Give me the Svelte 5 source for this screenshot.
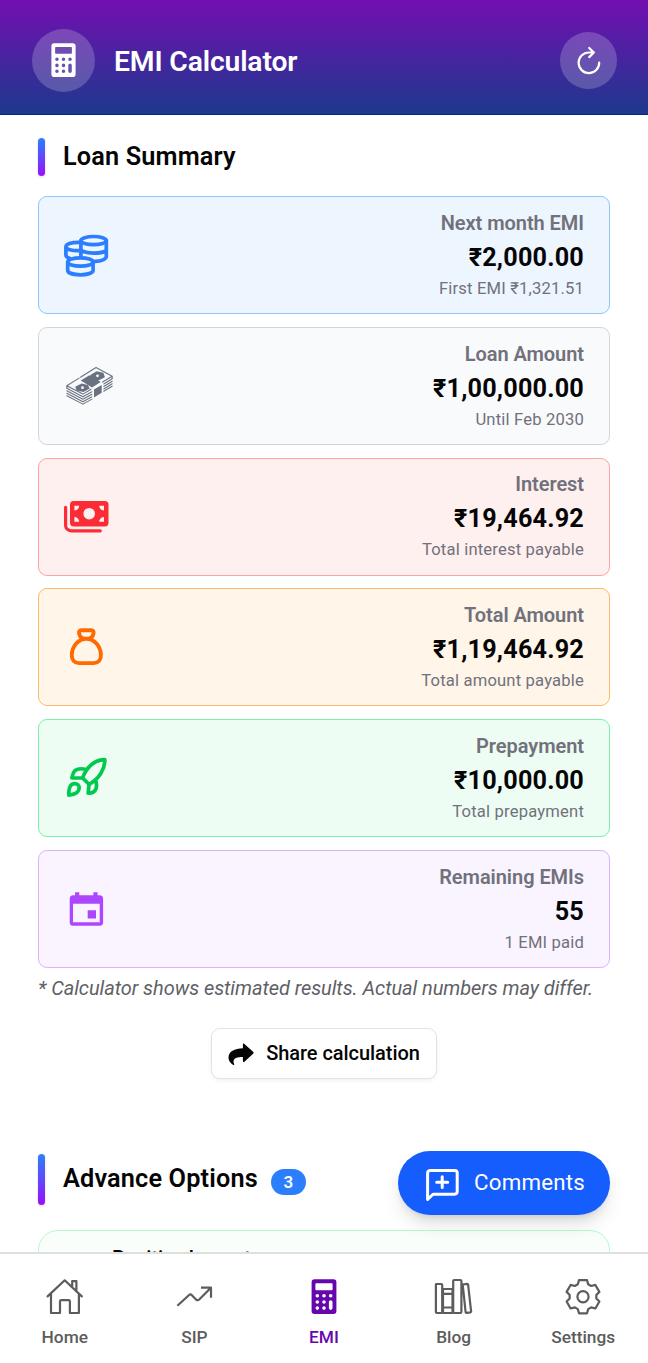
<script>
  const cards = [
    { icon: 'coins', label: 'Next month EMI', value: '₹2,000.00', note: 'First EMI ₹1,321.51', tone: 'blue' },
    { icon: 'stack', label: 'Loan Amount', value: '₹1,00,000.00', note: 'Until Feb 2030', tone: 'gray' },
    { icon: 'cash', label: 'Interest', value: '₹19,464.92', note: 'Total interest payable', tone: 'red' },
    { icon: 'bag', label: 'Total Amount', value: '₹1,19,464.92', note: 'Total amount payable', tone: 'orange' },
    { icon: 'rocket', label: 'Prepayment', value: '₹10,000.00', note: 'Total prepayment', tone: 'green' },
    { icon: 'event', label: 'Remaining EMIs', value: '55', note: '1 EMI paid', tone: 'purple' }
  ];
  const tabs = ['Home', 'SIP', 'EMI', 'Blog', 'Settings'];

  // Six-toothed gear outline centred on 20,19.7
  function gearPath() {
    const tooth = [[-5.2, -12.4], [-4, -16.6], [4, -16.6], [5.2, -12.4]];
    let d = '';
    for (let i = 0; i < 6; i++) {
      const a = (i * Math.PI) / 3;
      tooth.forEach(([x, y], j) => {
        const px = 20 + x * Math.cos(a) - y * Math.sin(a);
        const py = 19.7 + x * Math.sin(a) + y * Math.cos(a);
        d += `${i + j === 0 ? 'M' : 'L'}${px.toFixed(2)} ${py.toFixed(2)}`;
      });
    }
    return d + 'Z';
  }
</script>

{#snippet calculator()}
  <path fill="currentColor" fill-rule="evenodd" d="M10.5 2.3h19a2.9 2.9 0 0 1 2.9 2.9v28.9a2.9 2.9 0 0 1-2.9 2.9h-19a2.9 2.9 0 0 1-2.9-2.9V5.2a2.9 2.9 0 0 1 2.9-2.9zM12.2 6.2a.8.8 0 0 0-.8.8v5.4c0 .5.3.8.8.8h15.6c.5 0 .8-.3.8-.8V7a.8.8 0 0 0-.8-.8zM11.5 18.8a1.8 1.8 0 1 0 3.6 0a1.8 1.8 0 1 0-3.6 0M18.2 18.8a1.8 1.8 0 1 0 3.6 0a1.8 1.8 0 1 0-3.6 0M24.9 18.8a1.8 1.8 0 1 0 3.6 0a1.8 1.8 0 1 0-3.6 0M11.5 25a1.8 1.8 0 1 0 3.6 0a1.8 1.8 0 1 0-3.6 0M18.2 25a1.8 1.8 0 1 0 3.6 0a1.8 1.8 0 1 0-3.6 0M11.5 31.1a1.8 1.8 0 1 0 3.6 0a1.8 1.8 0 1 0-3.6 0M18.2 31.1a1.8 1.8 0 1 0 3.6 0a1.8 1.8 0 1 0-3.6 0M24.9 25a1.8 1.8 0 0 1 3.6 0v6.1a1.8 1.8 0 0 1-3.6 0z" />
{/snippet}

<div class="screen">
  <header>
    <span class="logo"><svg width="39" height="39" viewBox="0 0 40 40">{@render calculator()}</svg></span>
    <h1>EMI Calculator</h1>
    <button class="refresh" aria-label="Reset">
      <svg width="30" height="32" viewBox="0 -1 30 32" fill="none" stroke="currentColor" stroke-width="2.2" stroke-linecap="round" stroke-linejoin="round"><path d="M25.2 17.7a10.3 10.3 0 1 1-10.3-10.2h5M15.2 3l4.7 4.5-4.7 4.6" /></svg>
    </button>
  </header>

  <main>
    <h2 class="loan"><i></i><span>Loan Summary</span></h2>
    <section class="cards">
      {#each cards as c}
        <article class={c.tone}>
          <svg width="52" height="52" viewBox="0 0 52 52" fill="none" stroke="currentColor" stroke-linecap="round" stroke-linejoin="round">
            {#if c.icon === 'coins'}
              <g stroke-width="3.7">
                <ellipse cx="32.6" cy="11.6" rx="12.7" ry="4.1" />
                <path d="M19.9 11.6v18M45.3 11.6v16c0 2.5-5 4.7-11.2 4.7M19.9 20.2c1 5.2 25.4 5.2 25.4 0M18.1 13.4C10.1 13.3 4.9 15 4.9 17.7v8.3c0 1.4 1.2 2.4 3.2 3M4.9 17.7c0 2.5 6 4.2 13.2 4" />
                <ellipse cx="19.4" cy="33" rx="12.7" ry="4.2" fill="#edf5ff" />
                <path d="M6.7 33v8.2c0 6.1 25.4 6.1 25.4 0V33" />
              </g>
            {:else if c.icon === 'stack'}
              <path fill="currentColor" stroke="none" d="M19.7 20.5l8.7-5.3 11.3 6.8-8.7 5.4zM33 29.5l7.7-4.5v7.7L33 37.4zM14.2 26.8l6.4-3.3 6.2 1.4 2 3.7-6.4 3.5-6.8-1.6zM29.2 14.9l6.5-3.6 6.7 1.5 1.5 4.4-6.5 3.2-6.6-2.3z" />
              <circle cx="21.5" cy="27.7" r="1.4" fill="#f9fafb" stroke="none" />
              <circle cx="36.5" cy="15.8" r="1.4" fill="#f9fafb" stroke="none" />
              <path stroke-width="1.1" d="M19.5 17.2L35 7.5l16.2 8.8L41.6 22M18.1 18.1L5.8 25.8l16.1 8.3 8.2-4.8M5.8 25.8v2M51.2 16.3v2" />
              <path stroke-width="1.05" d="M5.8 28.3l16.1 8.5 9-5M5.8 30.8l16.1 8.5 9-5M5.8 33.3l16.1 8.5 9-5M5.8 35.8l16.1 8.3 9-5M51.2 18.8L42.8 24M51.2 21.3l-8.4 5.2M51.2 23.8l-8.4 5.2M51.2 26.3l-8.4 5" />
            {:else if c.icon === 'cash'}
              <path transform="translate(-.6 0)" fill="currentColor" stroke="none" fill-rule="evenodd" d="M13.2 10h31.3a3.6 3.6 0 0 1 3.6 3.6v18.2a3.6 3.6 0 0 1-3.6 3.6H13.2a3.6 3.6 0 0 1-3.6-3.6V13.6a3.6 3.6 0 0 1 3.6-3.6zM23 22.7a5.8 5.8 0 1 0 11.6 0a5.8 5.8 0 1 0-11.6 0M14 14.8v4.7c2.6 0 4.8-2.1 4.8-4.7zM38.8 14.8c0 2.6 2.2 4.7 4.8 4.7v-4.7zM14 26v4.8h4.8c0-2.6-2.2-4.8-4.8-4.8zM43.6 26c-2.6 0-4.8 2.2-4.8 4.8h4.8z" />
              <path stroke-width="3.2" d="M4.6 16.3v18.1a5.4 5.4 0 0 0 5.4 5.4h29.3" />
            {:else if c.icon === 'bag'}
              <path stroke-width="3.9" d="M20.5 9.2h9.6c2 0 2.9 1.5 2.4 3.3-.7 3-2.8 5.3-5.6 5.3h-3.2c-2.8 0-4.9-2.3-5.6-5.3-.4-1.8.4-3.3 2.4-3.3zM25.3 17.8c-8.1 0-14.5 7.7-14.5 16.5 0 4.9 2.9 7.8 7 7.8h15.1c4.1 0 7-2.9 7-7.8 0-8.8-6.4-16.5-14.6-16.5z" />
            {:else if c.icon === 'rocket'}
              <path stroke-width="3.7" d="M43.8 7.6c-8.7-.2-18.2 6.3-22.2 18.4l6.4 6.3C38.1 27 44.1 17.3 43.8 7.6zM24.4 17.2c-4.6-.9-8.4-.7-10.8 1.8-1.8 2-2.1 4.5-2.7 6.8L21.6 26M28 32.3l-.8 8.8c4.3.2 6.6-1.5 7.8-4.4.9-2.3.6-4.4 0-7.1M7.8 43.1c-.4-7 1.6-11.5 5.9-11.5 2.7 0 4.5 1.7 4.5 4.2 0 4.6-3.8 6.7-10.4 7.3z" />
            {:else}
              <path fill="currentColor" stroke="none" fill-rule="evenodd" d="M14.1 9.3h4.2v3h14.1v-3h4.2v3h2a3.5 3.5 0 0 1 3.5 3.5v23.4a3.5 3.5 0 0 1-3.5 3.5H12.2a3.5 3.5 0 0 1-3.5-3.5V15.8a3.5 3.5 0 0 1 3.5-3.5h1.9zM12 20.7v18.6h26.7V20.7zM26.7 27.3H35v8.3h-8.3z" />
            {/if}
          </svg>
          <div class="info">
            <div class="label">{c.label}</div>
            <div class="value">{c.value}</div>
            <div class="note">{c.note}</div>
          </div>
        </article>
      {/each}
    </section>
    <p class="disclaimer">* Calculator shows estimated results. Actual numbers may differ.</p>
    <button class="share">
      <svg width="26" height="23" viewBox="0 -0.8 26 23" fill="currentColor"><path d="M16.4 1.1c-.9-.8-1.5-.5-1.5.7v3.7C6.4 5.8.8 8.5.5 14.6c-.2 3.1 1.8 6.1 5 7.7.7.3 1 0 .7-.7-2.3-5.8 1.6-7.2 8.7-7.4v4c0 1.2.7 1.5 1.5.7l8.7-7.9c.7-.7.7-1.3 0-2z" /></svg>
      <span>Share calculation</span>
    </button>
    <h2 class="advance"><i></i><span>Advance Options</span><b>3</b></h2>
    <section class="option">Positive Impact</section>
  </main>

  <button class="comments">
    <svg width="34" height="34" viewBox="0 0 34 34" fill="none" stroke="currentColor" stroke-width="3" stroke-linecap="round" stroke-linejoin="round"><path d="M2.6 31.5V5a2.6 2.6 0 0 1 2.6-2.6h24.4A2.6 2.6 0 0 1 32.2 5v18.6a2.6 2.6 0 0 1-2.6 2.6H8zM11.7 14.2h11M17.2 8.8v10.8" /></svg>
    <span>Comments</span>
  </button>

  <nav>
    {#each tabs as t}
      <a href="#{t.toLowerCase()}" class:active={t === 'EMI'}>
        <svg width="40" height="40" viewBox="0 0 40 40" fill="none" stroke="currentColor" stroke-width="2.2" stroke-linecap="round" stroke-linejoin="round">
          {#if t === 'Home'}
            <path d="M2.6 19.4L19.7 3.3l17.1 16.1M6 17v19h9V24.4c0-.8.5-1.3 1.3-1.3h7.3c.8 0 1.3.5 1.3 1.3V36h9V17M27.2 9.5V4.2h4.2V13" />
          {:else if t === 'SIP'}
            <path stroke-linecap="butt" d="M3.4 28.7l11.4-10.5c1-.9 2.2-.9 3.1 0l4.1 4.2c1 1 2.2 1 3.2.1L36.9 10.8M27 10.7h10v10" />
          {:else if t === 'EMI'}
            <g stroke="none">{@render calculator()}</g>
          {:else if t === 'Blog'}
            <path d="M2.3 7h4.9c.6 0 1 .4 1 1v27c0 .6-.4 1-1 1H2.9c-.6 0-1-.4-1-1V7.4zM9 12h9.5v24H9zM9 16.8h9.5M9 30.5h9.5M20.2 3h6.2c.6 0 1 .4 1 1v31c0 .6-.4 1-1 1h-6.2c-.6 0-1-.4-1-1V4c0-.6.4-1 1-1zM28.7 7.5l4.5-.7c.5 0 .8.2.9.7l3 26.8c.1.5-.2.9-.7 1l-3.7.6c-.6.1-1-.2-1.1-.8z" />
          {:else}
            <path d={gearPath()} /><circle cx="20" cy="19.7" r="5.6" />
          {/if}
        </svg>
        <span>{t}</span>
      </a>
    {/each}
  </nav>
</div>

<style>
  :global(body) { margin: 0; background: #fff; }
  * { box-sizing: border-box; }
  .screen { position: relative; width: 648px; height: 1363px; display: flex; flex-direction: column; overflow: hidden; font-family: Roboto, sans-serif; color: #050506; background: #fff; }
  button { font: inherit; border: 0; padding: 0; }
  svg { flex: none; display: block; }
  header { height: 115px; flex: none; display: flex; align-items: center; padding: 6px 31px 0 32px; color: #fff; background: linear-gradient(#720fb1, #1d398d); border-bottom: 1px solid #06277f; }
  .logo { width: 63px; height: 63px; border-radius: 50%; display: grid; place-items: center; background: #ffffff33; }
  h1 { margin: 0 auto 0 19px; font-size: 28.3px; line-height: 36px; font-weight: 600; letter-spacing: -.15px; padding-top: 4px; }
  .refresh { width: 57px; height: 57px; border-radius: 50%; display: grid; place-items: center; color: #fff; background: #ffffff33; }
  main { flex: 1; min-height: 0; overflow: hidden; display: flex; flex-direction: column; padding: 23px 38px 0; }
  h2 { margin: 0; flex: none; display: flex; align-items: center; font-size: 25.3px; line-height: 36px; font-weight: 600; letter-spacing: .15px; }
  h2 i { width: 6.5px; align-self: stretch; margin-right: 18.5px; border-radius: 4px; background: linear-gradient(#2b7fff, #9810fa); box-shadow: 0 1px 3px #0002; }
  .loan { height: 38px; }
  .cards { flex: none; margin-top: 20px; display: flex; flex-direction: column; gap: 12.75px; }
  article { height: 118.05px; display: flex; justify-content: space-between; align-items: center; padding: 0 25px 0 22px; border: 1.3px solid; border-radius: 9px; }
  article.blue { background: #edf5ff; border-color: #8ec5ff; }
  article.gray { background: #f9fafc; border-color: #d1d5dc; }
  article.red { background: #fff0f0; border-color: #ffa2a2; }
  article.orange { background: #fff5e9; border-color: #ffb86a; }
  article.green { background: #edfdf3; border-color: #7bf1a8; }
  article.purple { background: #f9f4ff; border-color: #dab2ff; }
  .blue svg { color: #2b7fff; }
  .gray svg { color: #6a7282; }
  .red svg { color: #fb2c36; }
  .orange svg { color: #ff6900; }
  .green svg { color: #00c950; }
  .purple svg { color: #ad46ff; }
  .info { text-align: right; white-space: nowrap; padding-top: .5px; }
  .label { font-size: 20px; line-height: 27px; font-weight: 600; letter-spacing: -.05px; color: #71717b; }
  .value { font-size: 25.2px; line-height: 41px; font-weight: 700; letter-spacing: .2px; }
  .note { font-size: 16.6px; line-height: 22px; margin-bottom: 1px; letter-spacing: .18px; color: #71717b; }
  .disclaimer { margin: 6px 0 0; flex: none; font-size: 20px; line-height: 28px; letter-spacing: -.07px; font-style: italic; color: #5f5f68; white-space: nowrap; }
  .share { flex: none; align-self: center; width: 226px; height: 51px; margin-top: 26px; padding-bottom: 1px; display: flex; align-items: center; justify-content: center; gap: 12px; border: 1.5px solid #e4e4e7; border-radius: 9px; background: #fff; color: #050506; font-size: 20px; letter-spacing: -.05px; font-weight: 500; box-shadow: 0 2px 4px #0000000f; white-space: nowrap; }
  .advance { height: 51px; margin-top: 75px; }
  .advance span { margin-top: -1px; }
  .advance b { width: 35px; height: 26px; margin: 4px 0 0 13px; border-radius: 13px; background: #2b7fff; color: #fff; font-size: 17px; line-height: 26px; text-align: center; font-weight: 600; }
  .option { flex: none; height: 80px; margin-top: 25px; padding: 14px 0 0 73px; border: 1.3px solid #b9f8cf; border-radius: 20px; background: linear-gradient(#f8fefa, #fff); font-size: 20px; line-height: 26px; font-weight: 500; }
  .comments { position: absolute; right: 38px; top: 1151px; width: 212px; height: 63.5px; border-radius: 32px; display: flex; align-items: center; gap: 15px; padding: 4px 0 0 27px; background: #155dfc; color: #fff; font-size: 22.3px; letter-spacing: .2px; box-shadow: 0 12px 20px -4px #0002, 0 5px 9px -4px #0002; }
  .comments span { margin-top: -5px; }
  nav { flex: none; height: 111px; display: grid; grid-template-columns: repeat(5, 1fr); border-top: 2px solid #dfdfdf; background: #fff; }
  nav a { display: flex; flex-direction: column; align-items: center; padding-top: 23px; color: #5c5c5c; text-decoration: none; font-size: 17.3px; line-height: 22px; font-weight: 500; }
  nav a span { margin-top: 9px; }
  nav .active { color: #6606ad; }
</style>
